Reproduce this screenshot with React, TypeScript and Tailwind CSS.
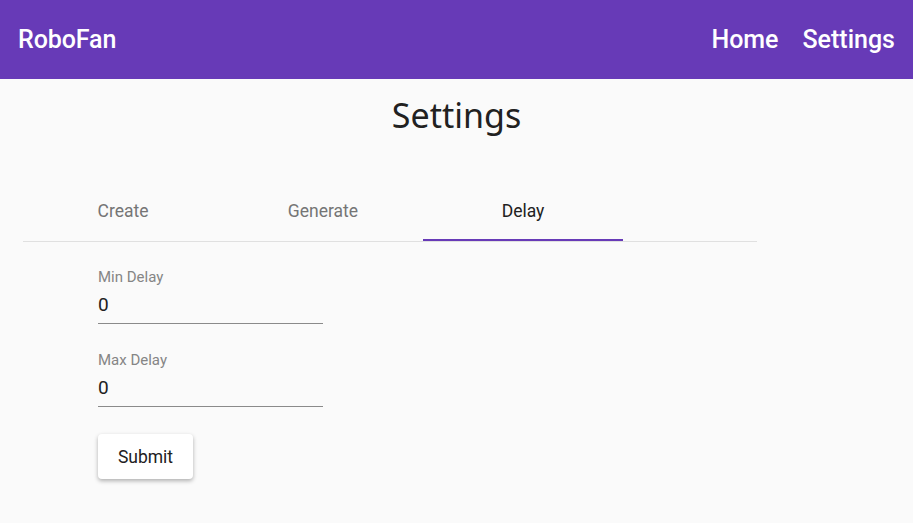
import React from "react";

export default function App() {
  const tabs = ["Create", "Generate", "Delay"];
  return (
    <div className="min-h-[523px] bg-[#fafafa]" style={{ fontFamily: "Roboto, 'Liberation Sans', sans-serif" }}>
      <header className="flex h-[79px] items-center justify-between bg-[#673ab7] pl-[18px] pr-[18px] text-white">
        <div className="text-[25px] font-medium tracking-[-0.1px]">RoboFan</div>
        <nav className="flex gap-[24px] text-[25px] font-medium">
          <span>Home</span>
          <span>Settings</span>
        </nav>
      </header>
      <h1
        className="mt-[14px] text-center text-[34px] leading-[44px] text-[#212121]"
        style={{ fontFamily: "'Noto Sans', 'Open Sans', sans-serif" }}
      >
        Settings
      </h1>
      <div className="ml-[23px] mt-[44px] w-[734px] border-b border-[#e0e0e0]">
        <div className="flex">
          {tabs.map((t, i) => (
            <div
              key={t}
              className={
                i === 2
                  ? "flex h-[60px] w-[200px] items-center justify-center border-b-2 border-[#673ab7] pt-[2px] text-[17.5px] text-[#212121]"
                  : "flex h-[60px] w-[200px] items-center justify-center border-b-2 border-transparent pt-[2px] text-[17.5px] text-[#757575]"
              }
            >
              {t}
            </div>
          ))}
        </div>
      </div>
      <div className="ml-[98px] mt-[26px] flex w-[225px] flex-col">
        <label className="text-[15px] leading-[18px] text-[#858585]">Min Delay</label>
        <div className="mt-[4px] h-[34px] border-b border-[#8a8a8a] pt-[2px] text-[19px] leading-[26px] text-[#212121]">0</div>
        <label className="mt-[27px] text-[15px] leading-[18px] text-[#858585]">Max Delay</label>
        <div className="mt-[4px] h-[34px] border-b border-[#8a8a8a] pt-[2px] text-[19px] leading-[26px] text-[#212121]">0</div>
      </div>
      <button className="ml-[98px] mt-[27px] h-[45px] w-[95px] rounded-[4px] bg-white pt-[1px] text-[17.5px] text-[#212121] shadow-[0_2px_4px_rgba(0,0,0,0.3)]">
        Submit
      </button>
    </div>
  );
}
